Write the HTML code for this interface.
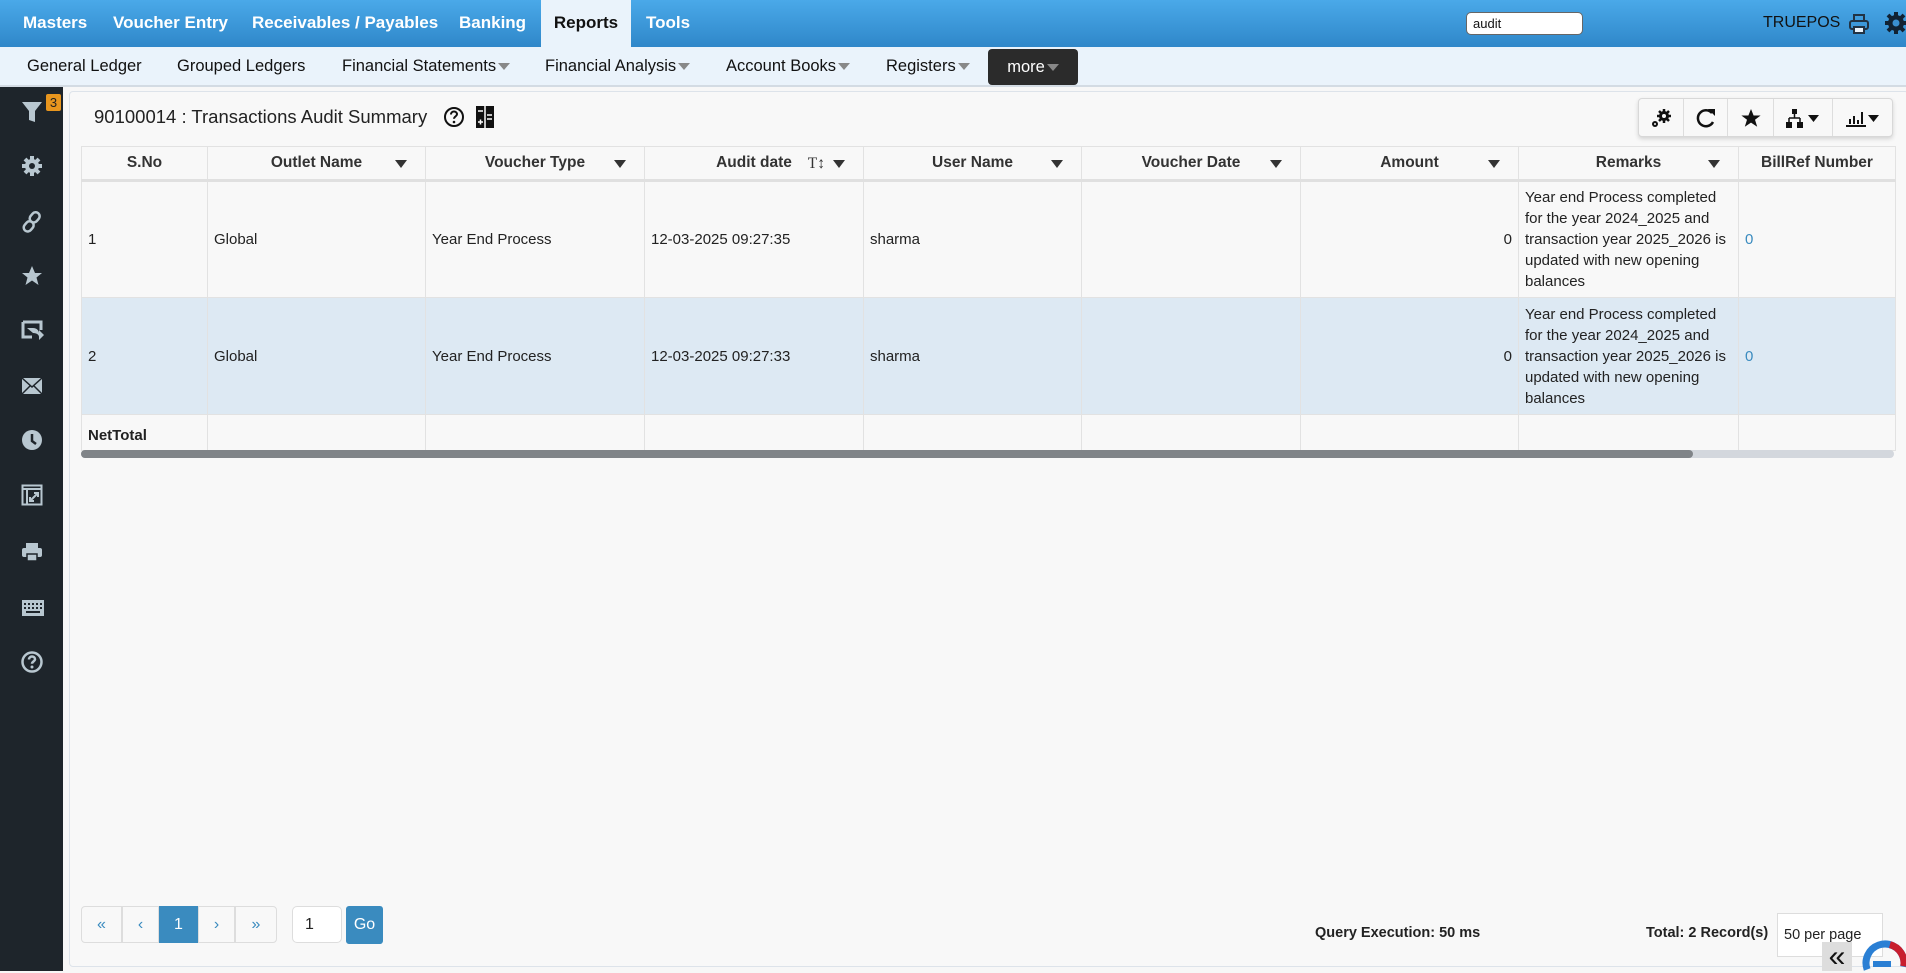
<!DOCTYPE html>
<html><head><meta charset="utf-8">
<style>
*{box-sizing:border-box;margin:0;padding:0}
body{width:1906px;height:971px;overflow:hidden;font-family:"Liberation Sans",sans-serif;background:#f7f7f7;position:relative;color:#222}
.top{position:absolute;left:0;top:0;width:1906px;height:47px;background:linear-gradient(#4aa9e9,#2f87c9)}
.top .it{position:absolute;top:0;height:47px;line-height:46px;color:#fff;font-weight:bold;font-size:17px}
.top .act{background:#eaf3fb;color:#111}
.sub{position:absolute;left:0;top:47px;width:1906px;height:40px;background:#eaf3fb;border-bottom:2px solid #d3dbe3}
.sub .it{position:absolute;top:0;line-height:38px;font-size:16.5px;color:#111}
.car{display:inline-block;width:0;height:0;border-left:6px solid transparent;border-right:6px solid transparent;border-top:7px solid #888;margin-left:2px;vertical-align:middle}
.side{position:absolute;left:0;top:87px;width:63px;height:884px;background:#1e252b}
.side svg{position:absolute;left:21px}
.main{position:absolute;left:69px;top:91px;width:1840px;height:876px;background:#f8f8f8;border:1px solid #dde3ea;border-radius:4px}
table{position:absolute;left:81px;top:146px;border-collapse:collapse;table-layout:fixed;font-family:"Liberation Sans",sans-serif;font-size:15px}
td,th{border:1px solid #e2e2e2;padding:0 6px;vertical-align:middle;overflow:hidden;white-space:nowrap}
th{height:34px;font-weight:bold;font-size:15.5px;color:#333;position:relative;border-bottom:3px solid #e0e0e0}
th .d{position:absolute;right:18px;top:13px;width:0;height:0;border-left:6px solid transparent;border-right:6px solid transparent;border-top:8px solid #333}
tr.r td{height:117px}
tr.alt td{background:#dde9f3}
td.rm{white-space:normal;line-height:21px}
.tb{position:absolute;left:1638px;top:98px;width:255px;height:39px;border:1px solid #d8d8d8;border-radius:4px;background:#f8f8f8;box-shadow:0 2px 4px rgba(0,0,0,.15);display:flex}
.tb div{border-right:1px solid #ddd;display:flex;align-items:center;justify-content:center}
.pg{position:absolute;top:906px;height:37px;border:1px solid #ddd;background:#f8f8f8;color:#3a8bbf;text-align:center;line-height:35px;font-size:16px}
</style></head><body>
<div class="top">
<div class="it" style="left:23px">Masters</div>
<div class="it" style="left:113px">Voucher Entry</div>
<div class="it" style="left:252px">Receivables / Payables</div>
<div class="it" style="left:459px">Banking</div>
<div class="it act" style="left:541px;width:90px;text-align:center">Reports</div>
<div class="it" style="left:646px">Tools</div>
<div style="position:absolute;left:1466px;top:12px;width:117px;height:23px;background:#fff;border:1px solid #666;border-radius:5px;font-size:13px;line-height:21px;padding-left:6px;color:#111">audit</div>
<div style="position:absolute;left:1763px;top:14px;color:#111;font-size:16px">TRUEPOS</div>
<svg style="position:absolute;left:1848px;top:13px" width="22" height="22" viewBox="0 0 22 22"><rect x="6" y="2" width="10" height="6" fill="none" stroke="#234" stroke-width="2"/><rect x="2" y="8" width="18" height="8" rx="2" fill="none" stroke="#234" stroke-width="2"/><rect x="6" y="14" width="10" height="6" fill="#eaf3fb" stroke="#234" stroke-width="2"/></svg>
<svg style="position:absolute;left:1884px;top:11px" width="24" height="24" viewBox="0 0 24 24"><circle cx="12" cy="12" r="8" fill="#123"/><g stroke="#123" stroke-width="4"><line x1="12" y1="1" x2="12" y2="23"/><line x1="1" y1="12" x2="23" y2="12"/><line x1="4" y1="4" x2="20" y2="20"/><line x1="20" y1="4" x2="4" y2="20"/></g><circle cx="12" cy="12" r="3.5" fill="#3a8fd0"/></svg>
</div>
<div class="sub">
<div class="it" style="left:27px">General Ledger</div>
<div class="it" style="left:177px">Grouped Ledgers</div>
<div class="it" style="left:342px">Financial Statements<span class="car"></span></div>
<div class="it" style="left:545px">Financial Analysis<span class="car"></span></div>
<div class="it" style="left:726px">Account Books<span class="car"></span></div>
<div class="it" style="left:886px">Registers<span class="car"></span></div>
<div class="it" style="left:988px;top:2px;width:90px;height:36px;background:#2b2b2b;border-radius:4px;color:#fff;text-align:center;line-height:36px">more<span class="car"></span></div>
</div>
<div class="side">
<svg style="top:13px" width="22" height="24" viewBox="0 0 22 24"><path d="M1 2h20l-7 9v11l-6-2v-9z" fill="#b8c7d0"/></svg>
<div style="position:absolute;left:46px;top:7px;width:15px;height:17px;background:#e8961e;border-radius:2px;color:#222;font-size:13px;text-align:center;line-height:17px">3</div>
<svg style="top:68px" width="22" height="22" viewBox="0 0 22 22"><g stroke="#b8c7d0" stroke-width="4"><line x1="11" y1="1" x2="11" y2="21"/><line x1="1" y1="11" x2="21" y2="11"/><line x1="4" y1="4" x2="18" y2="18"/><line x1="18" y1="4" x2="4" y2="18"/></g><circle cx="11" cy="11" r="7" fill="#b8c7d0"/><circle cx="11" cy="11" r="3" fill="#1e252b"/></svg>
<svg style="top:124px" width="22" height="22" viewBox="0 0 22 22"><g fill="none" stroke="#b8c7d0" stroke-width="2.5"><rect x="10" y="1" width="8" height="11" rx="4" transform="rotate(40 14 6)"/><rect x="4" y="10" width="8" height="11" rx="4" transform="rotate(40 8 15)"/></g></svg>
<svg style="top:178px" width="22" height="22" viewBox="0 0 22 22"><path d="M11 1l3 7h7l-5.5 4.5 2 7.5L11 15.5 4.5 20l2-7.5L1 8h7z" fill="#b8c7d0"/></svg>
<svg style="top:233px" width="24" height="22" viewBox="0 0 24 22"><path d="M2 2h18v8M2 2v15h9" fill="none" stroke="#b8c7d0" stroke-width="3"/><path d="M6 8l6 0c4 0 6 3 6 5v-3l5 5-5 5v-3c0-2-2-4-6-4z" fill="#b8c7d0"/></svg>
<svg style="top:290px" width="22" height="18" viewBox="0 0 22 18"><rect x="1" y="1" width="20" height="16" fill="#b8c7d0"/><path d="M1 1l10 9 10-9M1 17l8-8M21 17l-8-8" stroke="#1e252b" stroke-width="1.5" fill="none"/></svg>
<svg style="top:342px" width="22" height="22" viewBox="0 0 22 22"><circle cx="11" cy="11" r="10" fill="#b8c7d0"/><path d="M11 5v7l4 3" stroke="#1e252b" stroke-width="2.5" fill="none"/></svg>
<svg style="top:397px" width="22" height="22" viewBox="0 0 22 22"><rect x="1.5" y="1.5" width="19" height="19" fill="none" stroke="#b8c7d0" stroke-width="2"/><line x1="1" y1="5" x2="21" y2="5" stroke="#b8c7d0" stroke-width="2"/><line x1="6" y1="5" x2="6" y2="21" stroke="#b8c7d0" stroke-width="2"/><path d="M9 17l8-8M13 9h4v4M9 13v4h4" stroke="#b8c7d0" stroke-width="2" fill="none"/></svg>
<svg style="top:455px" width="22" height="20" viewBox="0 0 22 20"><rect x="5" y="1" width="12" height="5" fill="#b8c7d0"/><rect x="1" y="6" width="20" height="9" rx="2" fill="#b8c7d0"/><rect x="6" y="12" width="10" height="7" fill="#b8c7d0" stroke="#1e252b" stroke-width="1.5"/></svg>
<svg style="top:512px" width="24" height="18" viewBox="0 0 24 18"><rect x="1" y="1" width="22" height="16" fill="#b8c7d0"/><g fill="#1e252b"><rect x="3" y="4" width="2" height="2"/><rect x="7" y="4" width="2" height="2"/><rect x="11" y="4" width="2" height="2"/><rect x="15" y="4" width="2" height="2"/><rect x="19" y="4" width="2" height="2"/><rect x="3" y="8" width="2" height="2"/><rect x="7" y="8" width="2" height="2"/><rect x="11" y="8" width="2" height="2"/><rect x="15" y="8" width="2" height="2"/><rect x="19" y="8" width="2" height="2"/><rect x="5" y="12" width="14" height="2"/></g></svg>
<svg style="top:564px" width="22" height="22" viewBox="0 0 22 22"><circle cx="11" cy="11" r="9.5" fill="none" stroke="#b8c7d0" stroke-width="2.5"/><path d="M8 8.5c0-2 1.5-3 3-3s3 1 3 2.8c0 2-3 2.2-3 4.5" fill="none" stroke="#b8c7d0" stroke-width="2.5"/><circle cx="11" cy="16" r="1.5" fill="#b8c7d0"/></svg>
</div>
<div class="main"></div>
<div style="position:absolute;left:94px;top:106px;font-size:18.5px;color:#222">90100014 : Transactions Audit Summary</div>
<svg style="position:absolute;left:443px;top:106px" width="22" height="22" viewBox="0 0 22 22"><circle cx="11" cy="11" r="9" fill="none" stroke="#111" stroke-width="2"/><path d="M8 8.5c0-2 1.5-3 3-3s3 1 3 2.8c0 2-3 2.2-3 4.5" fill="none" stroke="#111" stroke-width="2"/><circle cx="11" cy="16" r="1.3" fill="#111"/></svg>
<svg style="position:absolute;left:476px;top:106px" width="18" height="22" viewBox="0 0 18 22"><rect x="0" y="0" width="18" height="22" fill="#111"/><g stroke="#fff" stroke-width="1.5"><line x1="9" y1="0" x2="9" y2="22"/><line x1="2" y1="5" x2="7" y2="5"/><line x1="11" y1="9" x2="16" y2="9"/><line x1="11" y1="13" x2="16" y2="13"/><line x1="2" y1="16" x2="7" y2="16"/><line x1="4.5" y1="13.5" x2="4.5" y2="18.5"/></g></svg>
<div class="tb">
<div style="width:45px"><svg width="22" height="20" viewBox="0 0 22 20"><circle cx="14" cy="8" r="5" fill="#111"/><g stroke="#111" stroke-width="2.5"><line x1="14" y1="1" x2="14" y2="15"/><line x1="7" y1="8" x2="21" y2="8"/><line x1="9" y1="3" x2="19" y2="13"/><line x1="19" y1="3" x2="9" y2="13"/></g><circle cx="14" cy="8" r="2" fill="#f8f8f8"/><circle cx="5" cy="16" r="3" fill="#111"/><circle cx="5" cy="16" r="1" fill="#f8f8f8"/></svg></div>
<div style="width:44px"><svg width="20" height="22" viewBox="0 0 20 22"><path d="M16 6A8 8 0 1 0 17 15" fill="none" stroke="#111" stroke-width="2.5"/><path d="M12 2h7v7z" fill="#111"/></svg></div>
<div style="width:46px"><svg width="20" height="20" viewBox="0 0 20 20"><path d="M10 1l2.6 6.5h7l-5.6 4.3 2.2 7L10 14.6 3.8 18.8l2.2-7L.4 7.5h7z" fill="#111"/></svg></div>
<div style="width:59px"><svg width="34" height="20" viewBox="0 0 34 20"><rect x="6" y="1" width="5" height="5" fill="#111"/><path d="M8.5 6v4M3 10h11M3 10v4M14 10v4" stroke="#111" stroke-width="1.5"/><rect x="0" y="14" width="6" height="6" fill="#111"/><rect x="11" y="14" width="6" height="6" fill="#111"/><path d="M22 7h11l-5.5 7z" fill="#111"/></svg></div>
<div style="width:59px;border-right:none"><svg width="34" height="20" viewBox="0 0 34 20"><path d="M0 18h20" stroke="#111" stroke-width="2"/><rect x="3" y="11" width="2" height="5" fill="#111"/><rect x="7" y="8" width="2" height="8" fill="#111"/><rect x="11" y="12" width="2" height="4" fill="#111"/><rect x="15" y="4" width="2" height="12" fill="#111"/><path d="M22 7h11l-5.5 7z" fill="#111"/></svg></div>
</div>
<table>
<colgroup><col style="width:126px"><col style="width:218px"><col style="width:219px"><col style="width:219px"><col style="width:218px"><col style="width:219px"><col style="width:218px"><col style="width:220px"><col style="width:157px"></colgroup>
<tr><th>S.No</th><th>Outlet Name<span class="d"></span></th><th>Voucher Type<span class="d"></span></th><th>Audit date<span style="position:absolute;right:38px;top:8px;font-family:'Liberation Serif',serif;font-weight:normal">T↕</span><span class="d"></span></th><th>User Name<span class="d"></span></th><th>Voucher Date<span class="d"></span></th><th>Amount<span class="d"></span></th><th>Remarks<span class="d"></span></th><th style="text-align:left;padding-left:22px">BillRef Number</th></tr>
<tr class="r"><td>1</td><td>Global</td><td>Year End Process</td><td>12-03-2025 09:27:35</td><td>sharma</td><td></td><td style="text-align:right">0</td><td class="rm">Year end Process completed for the year 2024_2025 and transaction year 2025_2026 is updated with new opening balances</td><td style="color:#3a8bbf">0</td></tr>
<tr class="r alt"><td>2</td><td>Global</td><td>Year End Process</td><td>12-03-2025 09:27:33</td><td>sharma</td><td></td><td style="text-align:right">0</td><td class="rm">Year end Process completed for the year 2024_2025 and transaction year 2025_2026 is updated with new opening balances</td><td style="color:#3a8bbf">0</td></tr>
<tr><td style="height:36px;font-weight:bold;padding-top:6px">NetTotal</td><td></td><td></td><td></td><td></td><td></td><td></td><td></td><td></td></tr>
</table>
<div style="position:absolute;left:81px;top:450px;width:1813px;height:8px;background:#d3d7dd;border-radius:4px"></div>
<div style="position:absolute;left:81px;top:450px;width:1612px;height:8px;background:#808488;border-radius:4px"></div>
<div class="pg" style="left:81px;width:41px;border-radius:4px 0 0 4px">«</div>
<div class="pg" style="left:122px;width:37px">‹</div>
<div class="pg" style="left:159px;width:39px;background:#3a8bbf;color:#fff;border-color:#3a8bbf">1</div>
<div class="pg" style="left:198px;width:37px">›</div>
<div class="pg" style="left:235px;width:42px;border-radius:0 4px 4px 0">»</div>
<div class="pg" style="left:292px;width:50px;background:#fff;color:#222;text-align:left;padding-left:12px;border-radius:5px">1</div>
<div class="pg" style="left:346px;width:37px;height:38px;background:#3a8bbf;color:#fff;border-color:#3a8bbf;border-radius:3px">Go</div>
<div style="position:absolute;left:1315px;top:925px;font-weight:bold;font-size:14.5px;color:#222">Query Execution: 50 ms</div>
<div style="position:absolute;left:1646px;top:925px;font-weight:bold;font-size:14.5px;color:#222">Total: 2 Record(s)</div>
<div style="position:absolute;left:1777px;top:913px;width:106px;height:44px;background:#fff;border:1px solid #ddd;font-size:14.5px;line-height:42px;padding-left:6px;overflow:hidden">50 per page</div>
<div style="position:absolute;left:1822px;top:942px;width:30px;height:29px;background:#ddd;font-size:30px;line-height:30px;text-align:center;color:#111">«</div>
<svg style="position:absolute;left:1855px;top:937px" width="51" height="34" viewBox="0 0 51 34"><circle cx="30" cy="26" r="19" fill="none" stroke="#2a7fd4" stroke-width="7" stroke-dasharray="70 200" transform="rotate(160 30 26)"/><circle cx="30" cy="26" r="19" fill="none" stroke="#c81e2e" stroke-width="7" stroke-dasharray="28 200" transform="rotate(-75 30 26)"/><line x1="18" y1="27" x2="36" y2="27" stroke="#2a7fd4" stroke-width="6"/></svg>
</body></html>
